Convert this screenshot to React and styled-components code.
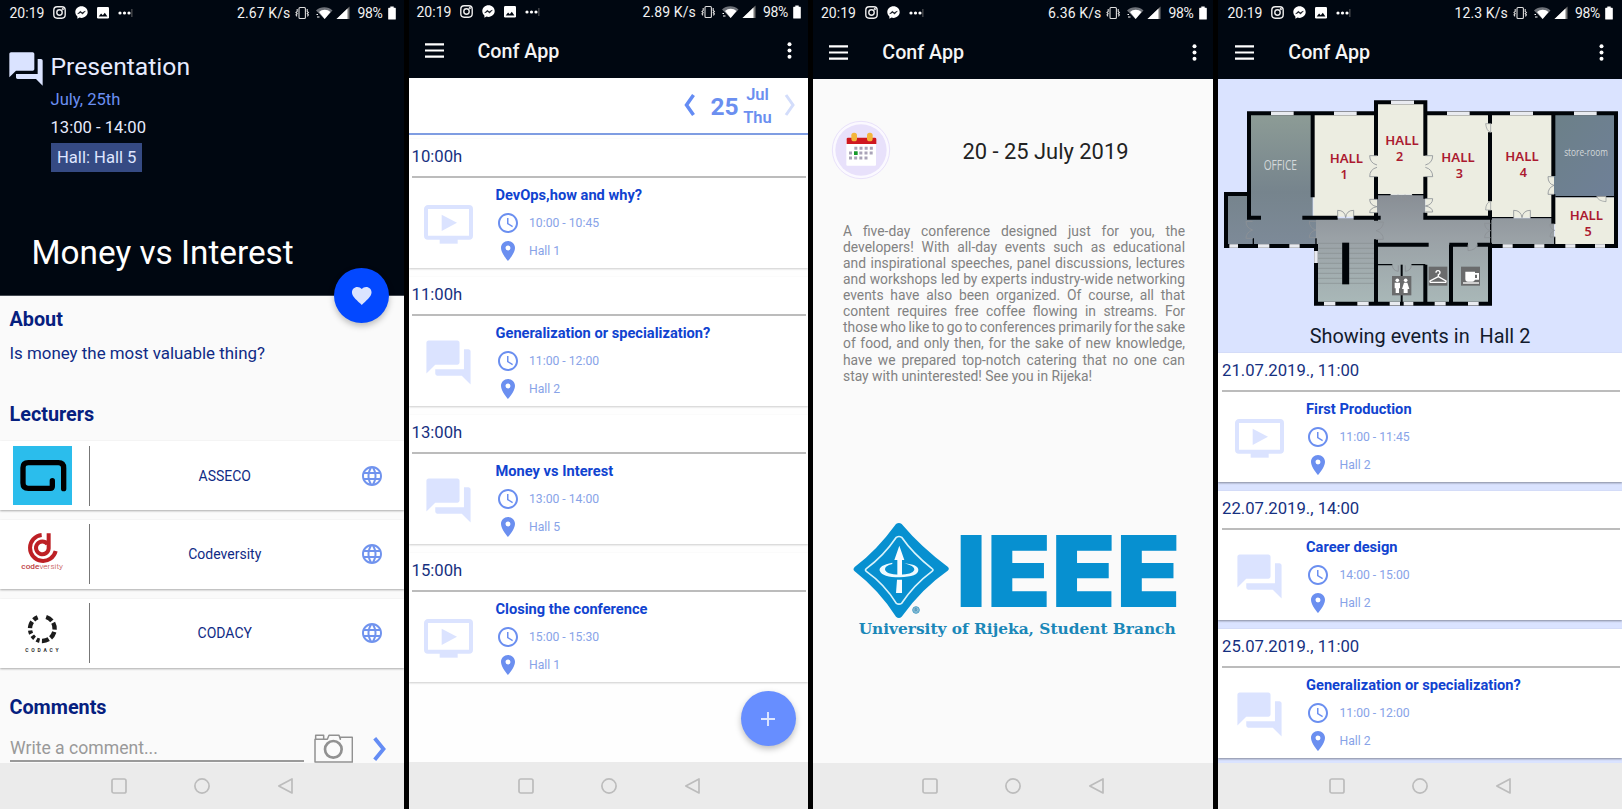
import React from 'react';
import styled, { createGlobalStyle } from 'styled-components';
import { MdForum, MdLanguage, MdLocationOn, MdFavorite, MdAccessTime } from 'react-icons/md';

const GlobalStyle = createGlobalStyle`
  * { box-sizing: border-box; }
  body { margin: 0; background: #000; font-family: Roboto, "Liberation Sans", sans-serif; }
  svg { display: block; flex: none; }
`;

const Board = styled.div`
  display: flex;
  gap: 5px;
  width: 1622px;
  height: 809px;
  overflow: hidden;
  background: #000;
`;

const Phone = styled.section`
  position: relative;
  display: flex;
  flex-direction: column;
  width: ${(p) => p.$width}px;
  height: 809px;
  flex: none;
  overflow: hidden;
  background: ${(p) => p.$bg};
`;

const Screen = styled.div`
  flex: 1;
  min-height: 0;
  overflow: hidden;
  display: flex;
  flex-direction: column;
`;

/* ---------- status bar ---------- */

const StatusRow = styled.div`
  display: flex;
  align-items: center;
  flex: none;
  height: ${(p) => p.$height}px;
  padding: 0 ${(p) => p.$right}px 0 ${(p) => p.$left}px;
  background: #000711;
  color: #f2f2f2;
  font-size: 14px;
  line-height: 16px;
`;

const StatusIcons = styled.div`
  display: flex;
  align-items: center;
  gap: 9px;
  margin-left: 9px;
  flex: 1;
`;

const Speed = styled.span`
  margin-right: 5px;
  letter-spacing: 0.1px;
`;

const Battery = styled.span`
  margin: 0 5px 0 7px;
  letter-spacing: -0.3px;
`;

const Instagram = () => (
  <svg width="13" height="13" viewBox="0 0 13 13" fill="none" stroke="#eee" strokeWidth="1.4">
    <rect x="0.8" y="0.8" width="11.4" height="11.4" rx="3.4" />
    <circle cx="6.5" cy="6.5" r="2.7" />
    <circle cx="9.8" cy="3.2" r="0.4" />
  </svg>
);

const Messenger = () => (
  <svg width="13" height="13" viewBox="0 0 13 13">
    <path d="M6.5 .3C3 .3.3 2.9.3 6.1c0 1.8.8 3.3 2.1 4.4v2.2l2.1-1.1c.6.2 1.3.3 2 .3 3.500 0 6.200-2.600 6.200-5.800S10 .3 6.500.3z" fill="#fff" />
    <path d="M2.700 7.900l2.600-2.700 1.900 1.600 3.100-1.700-2.700 3-1.900-1.600z" fill="#000711" stroke="#000711" strokeWidth=".5" />
  </svg>
);

const Picture = () => (
  <svg width="12" height="12" viewBox="0 0 12 12">
    <rect width="12" height="11.500" rx="1.200" fill="#fff" />
    <path d="M1.700 9.500l2.400-3 1.700 1.700 2-2.500 2.600 3.800z" fill="#000711" />
  </svg>
);

const Dots = () => (
  <svg width="15" height="8" viewBox="0 0 15 8" fill="#fff">
    <circle cx="2" cy="4" r="1.600" />
    <circle cx="6.500" cy="4" r="1.600" />
    <circle cx="11" cy="4" r="1.600" />
    <rect x="13.500" width=".8" height="8" fill="#777" />
  </svg>
);

const Signals = () => (
  <svg width="55" height="14" viewBox="0 0 55 14">
    <g fill="none" stroke="#ddd" strokeWidth="1.100">
      <rect x="4" y="1.500" width="6.400" height="11" rx="1" />
      <path d="M2.200 3v2.500l-1.200 1 1.200 1.200-1.200 1.200 1 1.500M12.200 3v2.500l1.200 1-1.200 1.200 1.200 1.200-1 1.500" />
    </g>
    <path d="M21 4.500a12 12 0 0 1 16.500 0L29.500 13z" fill="#6d7178" />
    <path d="M24 6a8.500 8.500 0 0 1 11.500 0L29.700 12.900z" fill="#fff" />
    <path d="M21.500 8.500h1.500M22 11h2.500" stroke="#fff" strokeWidth="1.200" />
    <path d="M41.500 13L54.500 0.500V13z" fill="#777" />
    <path d="M41.500 13L52.500 2.500V13z" fill="#fff" />
  </svg>
);

const BatteryIcon = () => (
  <svg width="8" height="14" viewBox="0 0 8 14" fill="#fff">
    <path d="M2.300.5h3.400v1.300h1.500q.6 0 .6.600v10.500q0 .6-.6.600H.8q-.6 0-.6-.6V2.400q0-.6.600-.6h1.500z" />
  </svg>
);

function StatusBar({ speed, height = 25, left, right, picture = true }) {
  return (
    <StatusRow $height={height} $left={left} $right={right}>
      <span>20:19</span>
      <StatusIcons>
        <Instagram />
        <Messenger />
        {picture && <Picture />}
        <Dots />
      </StatusIcons>
      <Speed>{speed}</Speed>
      <Signals />
      <Battery>98%</Battery>
      <BatteryIcon />
    </StatusRow>
  );
}

/* ---------- app bar ---------- */

const AppBarRow = styled.header`
  display: flex;
  align-items: center;
  flex: none;
  height: ${(p) => p.$height}px;
  padding: 0 ${(p) => p.$right}px 0 ${(p) => p.$left}px;
  background: #000711;
`;

const AppTitle = styled.h1`
  flex: 1;
  margin: 2px 0 0 34px;
  color: #f5f5f5;
  font-size: 19.700px;
  font-weight: 500;
  line-height: 24px;
`;

function AppBar({ height = 54, left = 16.300, right = 16 }) {
  return (
    <AppBarRow $height={height} $left={left} $right={right}>
      <svg width="19" height="15" viewBox="0 0 19 15" stroke="#fff" strokeWidth="2.200">
        <path d="M0 1.300h19M0 7.500h19M0 13.700h19" />
      </svg>
      <AppTitle>Conf App</AppTitle>
      <svg width="5" height="17" viewBox="0 0 5 17" fill="#fff">
        <circle cx="2.500" cy="2.200" r="2" />
        <circle cx="2.500" cy="8.500" r="2" />
        <circle cx="2.500" cy="14.800" r="2" />
      </svg>
    </AppBarRow>
  );
}

/* ---------- system navigation ---------- */

const NavRow = styled.nav`
  display: flex;
  align-items: center;
  justify-content: center;
  gap: 67px;
  flex: none;
  height: ${(p) => p.$height}px;
  background: #ebebeb;
`;

const SystemNav = ({ height = 46 }) => (
  <NavRow $height={height}>
    <svg width="16" height="16" viewBox="0 0 16 16" fill="none" stroke="#bcbcbc" strokeWidth="1.700">
      <rect x="1" y="1" width="14" height="14" rx="1.800" />
    </svg>
    <svg width="16" height="16" viewBox="0 0 16 16" fill="none" stroke="#bcbcbc" strokeWidth="1.700">
      <circle cx="8" cy="8" r="7.100" />
    </svg>
    <svg width="16" height="16" viewBox="0 0 16 16" fill="none" stroke="#bcbcbc" strokeWidth="1.700" strokeLinejoin="round">
      <path d="M1.800 8L15 1v14z" />
    </svg>
  </NavRow>
);

/* ---------- floating action button ---------- */

const Fab = styled.button`
  position: absolute;
  left: ${(p) => p.$x}px;
  top: ${(p) => p.$y}px;
  width: 55px;
  height: 55px;
  padding: 0;
  border: 0;
  border-radius: 50%;
  display: flex;
  align-items: center;
  justify-content: center;
  background: ${(p) => p.$color};
  color: #dbe4ff;
  box-shadow: 0 3px 6px rgba(0, 0, 0, 0.25);
`;

/* ---------- presentation details ---------- */

const Hero = styled.div`
  height: 271px;
  flex: none;
  background: #000711;
  border-bottom: 1px solid #444a52;
`;

const HeroTop = styled.div`
  display: flex;
  padding: 26px 0 0 5.500px;
  svg { margin-top: -2px; color: #dae3ff; }
`;

const HeroInfo = styled.div`
  padding-left: 5px;
  color: #e6ebff;
  font-size: 16.600px;
  line-height: 27.700px;
`;

const Kind = styled.div`
  font-size: 24.700px;
  line-height: 32px;
  margin-bottom: 3px;
`;

const Day = styled.div`
  color: #6b8ff2;
`;

const HallTag = styled.span`
  display: inline-block;
  margin-top: 1.500px;
  padding: 0.800px 6px 0 6.500px;
  background: #354a83;
  line-height: 28px;
  color: #dfe6ff;
`;

const HeroTitle = styled.h1`
  margin: 59px 0 0 31.500px;
  color: #fff;
  font-size: 33.300px;
  font-weight: 400;
  line-height: 44px;
`;

const SectionTitle = styled.h2`
  margin: ${(p) => p.$top}px 0 0 9.500px;
  color: #06207f;
  font-size: 19.800px;
  font-weight: 700;
  line-height: 24px;
`;

const About = styled.p`
  margin: 9.500px 0 0 9.500px;
  color: #0f2b85;
  font-size: 16.900px;
  line-height: 24px;
`;

const LecturerList = styled.div`
  display: flex;
  flex-direction: column;
  gap: 9.500px;
  margin-top: 14px;
`;

const LecturerCard = styled.div`
  display: flex;
  align-items: center;
  height: 69.300px;
  padding: 0 20px 0 12.500px;
  background: #fff;
  box-shadow: 0 1px 2px rgba(0, 0, 0, 0.32);
`;

const LogoBox = styled.div`
  width: 77px;
  height: 60px;
  border-right: 1px solid #777;
`;

const LecturerName = styled.div`
  flex: 1;
  text-align: center;
  color: #0f2b85;
  font-size: 14px;
  line-height: 20px;
`;

const CommentRow = styled.div`
  display: flex;
  align-items: flex-end;
  height: 43.500px;
  padding-left: 10px;
`;

const CommentField = styled.div`
  width: 294px;
  height: 36px;
  margin: 0 10px 1px 0;
  padding-top: 10.500px;
  border-bottom: 2px solid #9a9a9a;
  color: #999;
  font-size: 17.600px;
  line-height: 22px;
`;

const SendIcon = styled.svg`
  margin: 0 0 2px 20px;
`;

const AssecoLogo = () => (
  <svg width="59" height="59" viewBox="0 0 177 177">
    <rect width="177" height="177" fill="#2bbdec" />
    <path d="M118 104v17q0 6-6 6H46q-16 0-16-16V65q0-15 16-15h90q16 0 16 16v62" fill="none" stroke="#000" strokeWidth="16" strokeLinecap="round" strokeLinejoin="round" />
  </svg>
);

const CodeversityLogo = () => (
  <svg width="59" height="59" viewBox="0 0 177 177">
    <g fill="none" stroke="#bd2025">
      <path d="M86 33A39 39 0 1 0 128 81" strokeWidth="12" />
      <path d="M103 60A19 19 0 1 0 107 73V28" strokeWidth="12" />
    </g>
    <text x="25" y="136" fontSize="24" textLength="125" lengthAdjust="spacingAndGlyphs" fill="#bd3a3d"><tspan fontWeight="500">code</tspan><tspan fontWeight="300">versity</tspan></text>
  </svg>
);

const CodacyLogo = () => (
  <svg width="59" height="59" viewBox="0 0 177 177">
    <circle cx="88" cy="77" r="37" fill="none" stroke="#1c1c1c" strokeWidth="13" strokeDasharray="21 7 21 7 21 7 21 7 10 7 10 7 10 7 21 7 14 200" transform="rotate(-72 88 77)" />
    <text x="37" y="148" fontSize="15" fontWeight="700" textLength="100" fill="#333">CODACY</text>
  </svg>
);

const lecturers = [
  { name: 'ASSECO', logo: <AssecoLogo /> },
  { name: 'Codeversity', logo: <CodeversityLogo /> },
  { name: 'CODACY', logo: <CodacyLogo /> },
];

function DetailsPhone() {
  return (
    <Phone $width={404} $bg="#fafafa">
      <StatusBar speed="2.67 K/s" left={9.5} right={8.5} />
      <Screen>
        <Hero>
          <HeroTop>
            <MdForum size={40} />
            <HeroInfo>
              <Kind>Presentation</Kind>
              <Day>July, 25th</Day>
              <div>13:00 - 14:00</div>
              <HallTag>Hall: Hall 5</HallTag>
            </HeroInfo>
          </HeroTop>
          <HeroTitle>Money vs Interest</HeroTitle>
        </Hero>
        <SectionTitle $top={11.5}>About</SectionTitle>
        <About>Is money the most valuable thing?</About>
        <SectionTitle $top={38}>Lecturers</SectionTitle>
        <LecturerList>
          {lecturers.map((l) => (
            <LecturerCard key={l.name}>
              <LogoBox>{l.logo}</LogoBox>
              <LecturerName>{l.name}</LecturerName>
              <MdLanguage size={24} color="#7093ee" />
            </LecturerCard>
          ))}
        </LecturerList>
        <SectionTitle $top={28}>Comments</SectionTitle>
        <CommentRow>
          <CommentField>Write a comment...</CommentField>
          <svg width="39" height="30" viewBox="0 0 117 90" fill="none" stroke="#919191" strokeWidth="4.500">
            <path d="M3 19h37l5-12h30l4 12-0-6h36v74H3zM5 17V7h24v10" strokeLinejoin="round" />
            <circle cx="58" cy="49" r="25" strokeWidth="8" />
          </svg>
          <SendIcon width="14" height="24" viewBox="0 0 14 24" fill="none" stroke="#648cf4" strokeWidth="3.800">
            <path d="M1.700 1.300L10.500 12 1.700 22.700" />
          </SendIcon>
        </CommentRow>
      </Screen>
      <SystemNav />
      <Fab $x={334.2} $y={268.2} $color="#0348ff">
        <MdFavorite size={23.500} />
      </Fab>
    </Phone>
  );
}

/* ---------- event cards ---------- */

const EventList = styled.div`
  display: flex;
  flex-direction: column;
  gap: 9px;
`;

const EventCard = styled.article`
  height: 129px;
  flex: none;
  padding-left: ${(p) => (p.$soft ? 0 : 1.5)}px;
  background: #fff;
  box-shadow: 0 1px 2px ${(p) => (p.$soft ? 'rgba(0,0,0,0.2)' : 'rgba(0,0,0,0.4)')};
`;

const EventTime = styled.div`
  height: 39px;
  margin: 0 2px 0 2.500px;
  padding: 5.500px 0 0;
  border-bottom: 2px solid #bcbcbc;
  color: #16307f;
  font-size: 16.700px;
  line-height: 24px;
`;

const EventBody = styled.div`
  display: flex;
`;

const EventIcon = styled.div`
  width: 86.500px;
  padding: ${(p) => (p.$talk ? '19.500px 0 0 13px' : '26px 0 0 15px')};
  color: #dbe3ff;
`;

const EventTitle = styled.h3`
  margin: 6.500px 0 4px;
  color: #1043d0;
  font-size: 14.650px;
  font-weight: 700;
  line-height: 20px;
`;

const EventLine = styled.div`
  display: flex;
  align-items: center;
  gap: 9.500px;
  height: 28.500px;
  color: #88a3e8;
  font-size: 12.200px;
  svg { color: #6b8ff0; }
`;

const VideoIcon = () => (
  <svg width="49" height="42" viewBox="0 0 147 126">
    <rect x="6" y="9" width="135" height="92" rx="6" fill="none" stroke="#dbe3ff" strokeWidth="12" />
    <path d="M53 32l46 24-46 25z" fill="#dbe3ff" />
    <rect x="47" y="105" width="54" height="14" fill="#dbe3ff" />
  </svg>
);

function Event({ when, title, time, hall, talk, soft }) {
  return (
    <EventCard $soft={soft}>
      <EventTime>{when}</EventTime>
      <EventBody>
        <EventIcon $talk={talk}>{talk ? <MdForum size={53} /> : <VideoIcon />}</EventIcon>
        <div>
          <EventTitle>{title}</EventTitle>
          <EventLine>
            <MdAccessTime size={24} />
            {time}
          </EventLine>
          <EventLine>
            <MdLocationOn size={24} />
            {hall}
          </EventLine>
        </div>
      </EventBody>
    </EventCard>
  );
}

/* ---------- schedule ---------- */

const DateBar = styled.div`
  display: flex;
  align-items: center;
  justify-content: flex-end;
  height: 56.500px;
  margin-bottom: 4.500px;
  padding-right: 12.500px;
  border-bottom: 2px solid #7f9de2;
  background: #fff;
  color: #6b8ff0;
  font-weight: 700;
  flex: none;
`;

const DayNumber = styled.div`
  margin: 3px 4px 0 15px;
  font-size: 24.500px;
  line-height: 28px;
`;

const MonthDay = styled.div`
  width: 30px;
  margin: 3px 11px 0 0;
  text-align: center;
  font-size: 16.500px;
  font-weight: 600;
  line-height: 22.800px;
`;

const schedule = [
  { when: '10:00h', title: 'DevOps,how and why?', time: '10:00 - 10:45', hall: 'Hall 1' },
  { when: '11:00h', title: 'Generalization or specialization?', time: '11:00 - 12:00', hall: 'Hall 2', talk: true },
  { when: '13:00h', title: 'Money vs Interest', time: '13:00 - 14:00', hall: 'Hall 5', talk: true },
  { when: '15:00h', title: 'Closing the conference', time: '15:00 - 15:30', hall: 'Hall 1' },
];

function SchedulePhone() {
  return (
    <Phone $width={399} $bg="#fefefe">
      <StatusBar speed="2.89 K/s" height={23} left={7.5} right={7} />
      <AppBar height={55} left={15.5} />
      <Screen>
        <DateBar>
          <svg width="12" height="22" viewBox="0 0 12 22" fill="none" stroke="#648cf4" strokeWidth="3.500">
            <path d="M10.500 1L3.500 11l7 10" />
          </svg>
          <DayNumber>25</DayNumber>
          <MonthDay>
            <div>Jul</div>
            <div>Thu</div>
          </MonthDay>
          <svg width="12" height="22" viewBox="0 0 12 22" fill="none" stroke="#d3ddfb" strokeWidth="3">
            <path d="M2 1l7 10-7 10" />
          </svg>
        </DateBar>
        <EventList>
          {schedule.map((e) => (
            <Event key={e.when} soft {...e} />
          ))}
        </EventList>
      </Screen>
      <SystemNav height={47} />
      <Fab $x={331.8} $y={691.2} $color="#678eff">
        <svg width="14" height="14" viewBox="0 0 14 14" stroke="#dfe7ff" strokeWidth="1.900">
          <path d="M7 0v14M0 7h14" />
        </svg>
      </Fab>
    </Phone>
  );
}

/* ---------- conference info ---------- */

const DateRow = styled.div`
  display: flex;
  align-items: center;
  padding: 41px 0 0 18px;
`;

const DateText = styled.div`
  flex: 1;
  padding: 3px 13px 0 0;
  text-align: center;
  color: #222;
  font-size: 21.900px;
  line-height: 28px;
`;

const Blurb = styled.div`
  width: 342px;
  margin: 42.500px 0 0 30px;
  color: #828282;
  font-size: 13.850px;
  line-height: 16.130px;
`;

const BlurbLine = styled.div`
  white-space: nowrap;
  word-spacing: ${(p) => (p.$last ? 0 : -2)}px;
  text-align: ${(p) => (p.$last ? 'left' : 'justify')};
  text-align-last: ${(p) => (p.$last ? 'left' : 'justify')};
`;

const blurb = [
  'A five-day conference designed just for you, the',
  'developers! With all-day events such as educational',
  'and inspirational speeches, panel discussions, lectures',
  'and workshops led by experts industry-wide networking',
  'events have also been organized. Of course, all that',
  'content requires free coffee flowing in streams. For',
  'those who like to go to conferences primarily for the sake',
  'of food, and only then, for the sake of new knowledge,',
  'have we prepared top-notch catering that no one can',
  'stay with uninterested! See you in Rijeka!',
];

const LogoArea = styled.div`
  padding: 121.500px 0 0 39.500px;
`;

const Calendar = () => (
  <svg width="60" height="60" viewBox="0 0 180 180">
    <circle cx="90" cy="90" r="86" fill="#fbf9ff" stroke="#e9e2fa" strokeWidth="3" />
    <circle cx="90" cy="90" r="77" fill="#e8e1fb" />
    <rect x="46" y="60" width="89" height="77" rx="3" fill="#fff" />
    <path d="M47 57q0-4 4-4h80q5 0 5 4v15H47z" fill="#cf1820" />
    <rect x="61" y="38" width="17" height="26" rx="8" fill="#f3b63c" />
    <rect x="108" y="38" width="17" height="26" rx="8" fill="#f3b63c" />
    <g fill="none" stroke="#a9a3b8" strokeWidth="9" strokeDasharray="9 6.500">
      <path d="M70 85h57M54 99h72M54 114h57" />
    </g>
    <rect x="69" y="94" width="11" height="11" fill="#169b2a" />
  </svg>
);

const IeeeLogo = () => (
  <svg width="340" height="138" viewBox="0 -54 1020 414">
    <path d="M146 3q-8-6-17 0Q70 84 5 132q-7 7 0 13 72 56 124 136 9 8 17 0 60-84 138-138 7-6 0-12Q206 74 146 3z" fill="#0790d0" />
    <path d="M129 42q8-5 16 0Q178 90 236 136q6 4 0 8-54 40-91 96-8 5-16 0-36-58-90-96-5-4 0-8 52-38 90-94z" fill="none" stroke="#d9f3fb" strokeWidth="5" transform="translate(1 1)" />
    <path d="M139 68l15 43h-7v45h-14v-45h-9zM132 170h15v40h-18z" fill="#f7fcff" />
    <path d="M118 119q-42 8-38 24 8 20 60 20 56-2 56-22 0-16-42-20 32 8 30 20-6 14-44 14-42 0-44-16-1-10 22-16z" fill="#eefaff" />
    <circle cx="189" cy="261" r="10" fill="#8fc3dc" stroke="#4d9fc4" strokeWidth="3" />
    <path d="M186 266v-10h4q4 3 0 5h-4m3 0l4 5" fill="none" stroke="#3c85ae" strokeWidth="2" />
    <text x="308" y="252" fontFamily="Inter" fontWeight="900" fontSize="295" textLength="675" lengthAdjust="spacingAndGlyphs" fill="#0790d0">IEEE</text>
    <text x="17" y="332" fontFamily="DejaVu Serif" fontWeight="700" fontSize="44" textLength="951" lengthAdjust="spacingAndGlyphs" fill="#1a87b8">University of Rijeka, Student Branch</text>
  </svg>
);

function InfoPhone() {
  return (
    <Phone $width={400} $bg="#fafafa">
      <StatusBar speed="6.36 K/s" left={8} right={6.5} picture={false} />
      <AppBar />
      <Screen>
        <DateRow>
          <Calendar />
          <DateText>20 - 25 July 2019</DateText>
        </DateRow>
        <Blurb>
          {blurb.map((line, i) => (
            <BlurbLine key={line} $last={i === blurb.length - 1}>
              {line}
            </BlurbLine>
          ))}
        </Blurb>
        <LogoArea>
          <IeeeLogo />
        </LogoArea>
      </Screen>
      <SystemNav />
    </Phone>
  );
}

/* ---------- floor plan ---------- */

const PlanArea = styled.div`
  height: 274px;
  flex: none;
`;

const PlanCaption = styled.div`
  margin-top: 14px;
  text-align: center;
  color: #121a2c;
  font-size: 19.900px;
  line-height: 24px;
  white-space: pre;
`;

const windows = [
  [177, 130, 68], [366, 130, 68], [537, 97, 69], [705, 130, 68], [894, 130, 69], [1086, 130, 68],
  [52, 528, 26], [138, 528, 34], [232, 528, 31], [872, 528, 30], [967, 528, 30], [1060, 528, 30], [1149, 528, 30],
  [336, 701, 34], [436, 701, 34], [533, 701, 31], [575, 701, 29], [668, 701, 33], [768, 701, 32],
];

const doors = [
  'M495 257h-22q0 22 22 28M495 320h-22q0-22 22-28',
  'M640 257h22q0 22-22 28M640 320h22q0-22-22-28',
  'M495 388h-22q0 18 22 22M495 428h-22q0-14 22-18',
  'M640 386h22q0 18-22 22M640 426h22q0-14-22-18',
  'M377 443v-22q22 0 24 22M425 443v-22q-22 0-24 22',
  'M905 443v-22q22 0 25 22M955 443v-22q-22 0-25 22',
  'M536 374v20q18 0 21-18M600 374v20q-18 0-22-18M558 374v16q10 0 10-14 0 14 11 14v-16',
  'M122 454h-20q0 20 20 26M122 505h-20q0-18 20-25',
  'M312 454h-20q0 20 20 26M312 503h-20q0-18 20-23',
  'M492 456h22q0 20-22 26M492 508h22q0-20-22-26',
  'M836 460h-18q0 18 18 22M836 503h-18q0-16 18-21',
  'M1026 320h-18q0 22 18 26M1026 373h-18q0-20 18-27',
  'M1028 462h-14q0 16 14 19M1028 501h-14q0-14 14-20',
  'M768 524v18q24-2 28-18M541 584q0 18 18 20v-18M598 584q0 18-18 20v-18',
];

/* single doors whose leaf shows the room colour */
const leaves = [
  'M836 161h-15q2 22 15 26z',
  'M836 394q-15 4-15 26h15z',
  'M1154 379q4 14 28 16v-16z',
];

const hallLabels = [
  ['1', 403, 280, 396, 328], ['2', 570, 226, 563, 274], ['3', 738, 275, 742, 323], ['4', 930, 274, 934, 322], ['5', 1123, 449, 1128, 497],
];

const FloorPlan = () => (
  <svg width="404" height="232" viewBox="18 27 1212 696">
    <defs>
      <linearGradient id="office" x1="0" y1="0" x2="0" y2="1">
        <stop offset="0" stopColor="#8d9c96" /><stop offset="0.600" stopColor="#76848d" /><stop offset="1" stopColor="#7d8a98" />
      </linearGradient>
      <linearGradient id="hallway" x1="0" y1="0" x2="0" y2="1">
        <stop offset="0" stopColor="#888e95" /><stop offset="0.400" stopColor="#9aa1a6" /><stop offset="1" stopColor="#a9b8b8" />
      </linearGradient>
      <linearGradient id="store" x1="0" y1="0" x2="1" y2="1">
        <stop offset="0" stopColor="#6c8088" /><stop offset="1" stopColor="#6f8098" />
      </linearGradient>
    </defs>
    <path d="M110 130H302V445H312V524H42V372H110z" fill="url(#office)" />
    <path d="M495 374H640V445H1026V524H834V700H312V445H495z" fill="url(#hallway)" />
    <path d="M304 130H492V97H640V130H1026V443H640V374H495V440H304z" fill="#ecede1" />
    <rect x="1026" y="130" width="186" height="250" fill="url(#store)" />
    <rect x="1028" y="382" width="184" height="144" fill="#ecede1" />
    <path d="M318 520H390M318 535H390M318 550H390M318 565H390M318 580H390M318 595H390M318 610H390M318 625H390M318 640H487M412 520H487M412 535H487M412 550H487M412 565H487M412 580H487M412 595H487M412 610H487M412 625H487" stroke="#868e90" strokeWidth="2" />
    <g fill="none" stroke="#000408" strokeWidth="12">
      <path d="M147 443H111V130H302V382M302 130H492M492 257V97H640V257M640 130H1212V528H834V701H312V528H42V372H111" />
      <path d="M492 320V388M640 320V386M640 428V443H834V421M834 130V161M834 187V394M1024 130V318M1024 373V462M271 443H377M425 443H506M492 428V452M492 508V701M495 524H650M712 524H768M796 524H840M717 524V701M640 584V701" />
      <path d="M304 132V380M830 443H905M955 443H1026M1030 380H1212M495 374H536M600 374H640M498 584H541M598 584H640M836 443V528M1028 500V528M312 505V528M124 505V528" strokeWidth="4" />
      <path d="M569 584V701" strokeWidth="6" />
    </g>
    <path d="M401 518V643" stroke="#000408" strokeWidth="21" />
    <g stroke="#e9ebf0" strokeWidth="11">
      {windows.map(([x, y, w]) => (
        <path key={x + '-' + y} d={'M' + x + ' ' + y + 'h' + w} />
      ))}
      <path d="M312 543v36" />
    </g>
    <g fill="none" stroke="#8d9196" strokeWidth="2.500">
      {doors.map((d) => (
        <path key={d} d={d} />
      ))}
    </g>
    <g fill="#ecede1" stroke="#8d9196" strokeWidth="2">
      {leaves.map((d) => (
        <path key={d} d={d} />
      ))}
    </g>
    <g fill="#6a6b6c">
      <rect x="540" y="618" width="58" height="58" />
      <rect x="650" y="590" width="56" height="57" />
      <rect x="747" y="590" width="57" height="57" />
    </g>
    <g fill="#fff">
      <circle cx="556" cy="631" r="5.500" />
      <path d="M548 638h16v17h-3v14h-10v-14h-3z" />
      <circle cx="581" cy="631" r="5.500" />
      <path d="M576 638h10l6 19h-5v12h-12v-12h-5z" />
      <path d="M760 605h29v4h12v20h-12q-2 6-8 6h-13q-8 0-8-8zM789 614v10h6v-10z" fillRule="evenodd" />
      <rect x="753" y="637" width="48" height="4" />
    </g>
    <path d="M672 608q0-6 6-6t6 6q0 4-5 6v6l23 13q1 4-3 4H657q-4 0-3-4l25-13" fill="none" stroke="#fff" strokeWidth="4" />
    <g fontFamily="Noto Sans" fontWeight="600" fill="#ab1a30" textAnchor="middle">
      {hallLabels.map(([n, x, y, nx, ny]) => (
        <React.Fragment key={n}>
          <text x={x} y={y} fontSize="39" textLength="100" lengthAdjust="spacingAndGlyphs">HALL</text>
          <text x={nx} y={ny} fontSize="38">{n}</text>
        </React.Fragment>
      ))}
    </g>
    <g fontFamily="Open Sans" fontWeight="500" fill="#d3d8da" textAnchor="middle">
      <text x="205" y="299" fontSize="44" textLength="100" lengthAdjust="spacingAndGlyphs">OFFICE</text>
      <text x="1122" y="257" fontSize="34" textLength="131" lengthAdjust="spacingAndGlyphs">store-room</text>
    </g>
  </svg>
);

const hallEvents = [
  { when: '21.07.2019., 11:00', title: 'First Production', time: '11:00 - 11:45', hall: 'Hall 2' },
  { when: '22.07.2019., 14:00', title: 'Career design', time: '14:00 - 15:00', hall: 'Hall 2', talk: true },
  { when: '25.07.2019., 11:00', title: 'Generalization or specialization?', time: '11:00 - 12:00', hall: 'Hall 2', talk: true },
];

function HallsPhone() {
  return (
    <Phone $width={404} $bg="#dae3ff">
      <StatusBar speed="12.3 K/s" left={9.5} right={9} />
      <AppBar left={17.3} right={18.5} />
      <Screen>
        <PlanArea>
          <FloorPlan />
          <PlanCaption>{'Showing events in  Hall 2'}</PlanCaption>
        </PlanArea>
        <EventList>
          {hallEvents.map((e) => (
            <Event key={e.when} {...e} />
          ))}
        </EventList>
      </Screen>
      <SystemNav />
    </Phone>
  );
}

export default function App() {
  return (
    <>
      <GlobalStyle />
      <Board>
        <DetailsPhone />
        <SchedulePhone />
        <InfoPhone />
        <HallsPhone />
      </Board>
    </>
  );
}
